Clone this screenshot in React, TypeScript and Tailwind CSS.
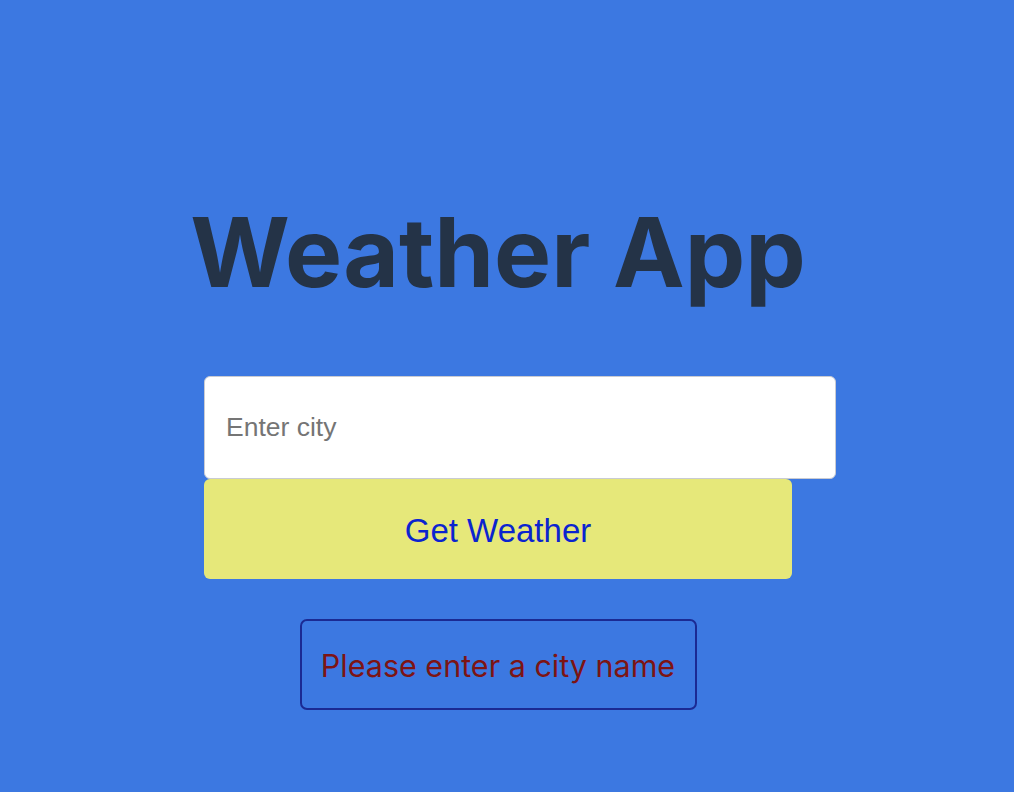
import { useState } from 'react';

export default function App() {
  const [city, setCity] = useState('');
  const [error, setError] = useState('Please enter a city name');

  const onSubmit = () => {
    if (!city.trim()) setError('Please enter a city name');
    else setError('');
  };

  return (
    <div className="flex min-h-[792px] w-full flex-col items-center bg-[#3c78e1] pt-[204px] pr-[18px]">
      {/* 타이틀 */}
      <h1 className="font-['Inter',sans-serif] text-[96px] font-bold leading-none text-[#243347]">
        Weather App
      </h1>

      <div className="mt-[76px] flex w-[588px] flex-col">
        <input
          value={city}
          onChange={(e) => setCity(e.target.value)}
          placeholder="Enter city"
          className="box-content h-[101px] w-full rounded-[6px] border border-[#c9cbd2] bg-white px-[21px] py-0 font-['Liberation_Sans',Arial,sans-serif] text-[26.5px] text-[#333] outline-none placeholder:text-[#757575]"
        />
        <button
          onClick={onSubmit}
          className="h-[100px] w-full rounded-[6px] bg-[#e6e87a] pt-[3px] font-['Liberation_Sans',Arial,sans-serif] text-[33px] text-[#0b24cf]"
        >
          Get Weather
        </button>
      </div>

      {error && (
        <div className="mt-[40px] flex h-[91px] w-[397px] items-center justify-center rounded-[7px] border-2 border-[#1b2a93] pt-[3px]">
          <p className="font-['Inter',sans-serif] text-[30.5px] leading-none text-[#7d1414]">{error}</p>
        </div>
      )}
    </div>
  );
}
